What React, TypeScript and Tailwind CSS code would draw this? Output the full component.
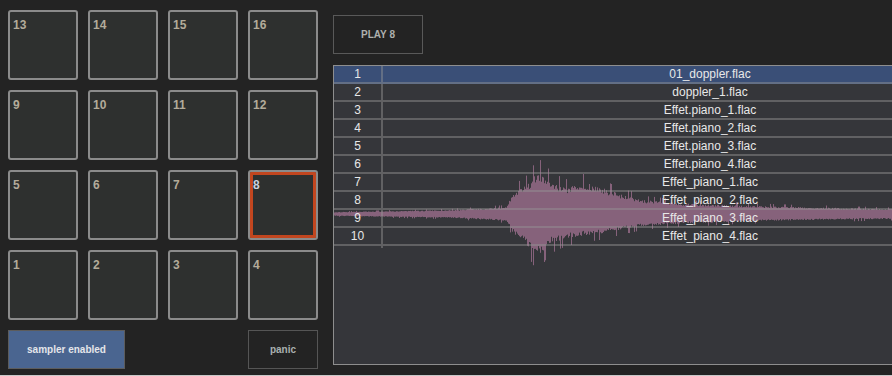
import React from 'react';

const files = [
  '01_doppler.flac',
  'doppler_1.flac',
  'Effet.piano_1.flac',
  'Effet.piano_2.flac',
  'Effet.piano_3.flac',
  'Effet.piano_4.flac',
  'Effet_piano_1.flac',
  'Effet_piano_2.flac',
  'Effet_piano_3.flac',
  'Effet_piano_4.flac',
];

const padRows = [
  [13, 14, 15, 16],
  [9, 10, 11, 12],
  [5, 6, 7, 8],
  [1, 2, 3, 4],
];

// envelope points: absolute x, amplitude up, amplitude down
const envelope: [number, number, number][] = [
  [333, 2, 2], [450, 4, 4], [505, 7, 7], [512, 22, 20], [525, 30, 32],
  [534, 40, 42], [540, 42, 40], [550, 32, 30], [565, 27, 25], [585, 32, 22],
  [600, 27, 20], [620, 20, 16], [645, 14, 12], [680, 11, 10], [760, 8, 7], [892, 5, 5],
];

function envAt(x: number) {
  for (let i = 0; i < envelope.length - 1; i++) {
    const [x0, u0, d0] = envelope[i];
    const [x1, u1, d1] = envelope[i + 1];
    if (x >= x0 && x <= x1) {
      const t = (x - x0) / (x1 - x0);
      return [u0 + (u1 - u0) * t, d0 + (d1 - d0) * t];
    }
  }
  return [5, 5];
}

function buildWave() {
  let seed = 23;
  const rand = () => {
    seed = (seed * 16807) % 2147483647;
    return seed / 2147483647;
  };
  const mid = 148;
  let d = '';
  for (let x = 333; x < 892; x++) {
    const [up, down] = envAt(x);
    const r1 = rand();
    const r2 = rand();
    const a = up * (0.75 + 0.25 * r1) * (r1 > 0.92 ? 1.3 : 1);
    const b = down * (0.75 + 0.25 * r2) * (r2 > 0.92 ? 1.3 : 1);
    const px = x - 333 + 0.5;
    d += `M${px} ${(mid - a).toFixed(1)}V${(mid + b).toFixed(1)}`;
  }
  return d;
}

const wavePath = buildWave();

function Pad({ n }: { n: number }) {
  const active = n === 8;
  return (
    <div
      className={`w-[70px] h-[70px] rounded-[3px] border-2 border-[#8b8b8b] bg-[#2e302f] px-[3px] ${
        active ? 'shadow-[inset_0_0_0_3px_#c2461f]' : ''
      }`}
    >
      <span className={`text-[12px] font-bold leading-[15px] ${active ? 'text-[#c9d1df]' : 'text-[#b3ab9a]'}`}>{n}</span>
    </div>
  );
}

export default function App() {
  return (
    <div className="w-[892px] h-[376px] bg-[#232323] flex flex-col overflow-hidden" style={{ fontFamily: '"Liberation Sans", Arial, sans-serif' }}>
      <div className="flex h-[375px]">
        <div className="w-[333px] shrink-0 pl-2 pt-[10px]">
          <div className="grid grid-cols-[repeat(4,70px)] gap-[10px]">
            {padRows.flat().map((n) => (
              <Pad key={n} n={n} />
            ))}
          </div>
          <div className="grid grid-cols-[repeat(4,70px)] gap-[10px] mt-[10px]">
            <button className="col-span-2 w-[117px] h-[39px] bg-[#4a6590] border border-[#5c5c5c] text-[10px] font-bold text-[#e4e6ea]">
              sampler enabled
            </button>
            <button className="col-start-4 w-[70px] h-[39px] border border-[#555] text-[10px] font-bold text-[#a9b0b0]">
              panic
            </button>
          </div>
        </div>

        <div className="flex-1 flex flex-col pt-[15px] overflow-hidden">
          <button className="w-[90px] h-[39px] border border-[#595959] text-[10px] font-bold text-[#aeb0ae]">
            PLAY 8
          </button>

          <div className="relative mt-[11px] w-[704px] h-[300px] shrink-0 border-l border-t border-b border-[#8e8e8e] bg-[#35363a]">
            <svg className="absolute left-0 top-0 pointer-events-none" width="559" height="298">
              <path d={wavePath} stroke="#86627b" strokeWidth="1" fill="none" />
            </svg>
            <div className="relative">
              {files.map((f, i) => (
                <div
                  key={f}
                  className={`flex h-[18px] border-b-2 border-[rgba(150,150,150,0.45)] text-[12px] text-[#e8e8e8] ${
                    i === 0 ? 'bg-[#3a4f77]' : ''
                  }`}
                >
                  <div className="w-[49px] border-r-2 border-[rgba(150,150,150,0.45)] text-center leading-[16px]">
                    {i + 1}
                  </div>
                  <div className="flex-1 text-center leading-[16px]">{f}</div>
                </div>
              ))}
              <div className="flex h-[118px]">
                <div className="w-[49px] h-[2px] border-r-2 border-[rgba(150,150,150,0.45)]" />
              </div>
            </div>
          </div>
        </div>
      </div>
      <div className="h-px bg-[#c8c8c8]" />
    </div>
  );
}
